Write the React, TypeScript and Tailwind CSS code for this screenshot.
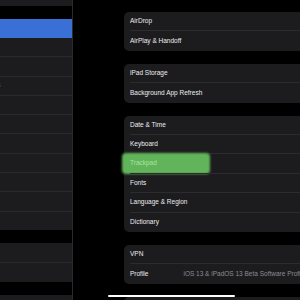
const groups: { label: string; value?: string; highlight?: boolean }[][] = [
  [{ label: "AirDrop" }, { label: "AirPlay & Handoff" }],
  [{ label: "iPad Storage" }, { label: "Background App Refresh" }],
  [
    { label: "Date & Time" },
    { label: "Keyboard" },
    { label: "Trackpad", highlight: true },
    { label: "Fonts" },
    { label: "Language & Region" },
    { label: "Dictionary" },
  ],
  [{ label: "VPN" }, { label: "Profile", value: "iOS 13 & iPadOS 13 Beta Software Profile" }],
];

function Row({ label, value, highlight, last }: { label: string; value?: string; highlight?: boolean; last: boolean }) {
  return (
    <div className="relative h-[19.4px] pl-[6px]">
      {highlight && (
        <div className="absolute left-[-2px] top-[-1px] h-[21px] w-[88px] rounded-[4px] bg-[#62b45a] blur-[1px]" />
      )}
      <div className={`relative flex h-full items-center ${last ? "" : "border-b border-[#2c2c2e]"}`}>
        <span className={highlight ? "text-[#a8e4a0]" : "text-[#ececee]"}>{label}</span>
        {value && <span className="ml-[35px] whitespace-nowrap text-[#8c8c90]">{value}</span>}
      </div>
    </div>
  );
}

export default function App() {
  return (
    <div
      className="relative flex h-[300px] w-[300px] overflow-hidden bg-black text-[6.5px] leading-none"
      style={{ fontFamily: '"Liberation Sans", Arial, sans-serif' }}
    >
      {/* sidebar */}
      <div className="flex w-[73px] shrink-0 flex-col border-r border-[#2a2a2c] bg-black">
        <div className="h-[6px] bg-[#1c1c1e]" />
        <div className="h-[13px]" />
        <div className="h-[19px] bg-[#3a6fd6]" />
        <div className="flex h-[192px] flex-col bg-[#1c1c1e]">
          {Array.from({ length: 10 }).map((_, i) => (
            <div key={i} className="flex flex-1 items-center border-b border-[#2a2a2c] last:border-b-0">
              {i === 2 && <span className="ml-[-3px] text-[#d0d0d0]">s</span>}
            </div>
          ))}
        </div>
        <div className="h-[13px]" />
        <div className="flex h-[39px] flex-col bg-[#1c1c1e]">
          <div className="flex-1 border-b border-[#2a2a2c]" />
          <div className="flex-1" />
        </div>
        <div className="h-[13px]" />
        <div className="flex-1 bg-[#1c1c1e]" />
      </div>

      {/* main */}
      <div className="flex flex-1 flex-col gap-[13px] pl-[51px] pt-[12px]">
        {groups.map((g, gi) => (
          <div key={gi} className="w-[200px] shrink-0 rounded-[5px] bg-[#1c1c1e]">
            {g.map((r, ri) => (
              <Row key={r.label} {...r} last={ri === g.length - 1} />
            ))}
          </div>
        ))}
        <div className="h-[20px] w-[200px] shrink-0 rounded-[5px] bg-[#1c1c1e]" />
      </div>

      {/* home indicator */}
      <div className="absolute left-[108px] top-[295px] h-[2px] w-[127px] rounded-full bg-white" />
    </div>
  );
}
